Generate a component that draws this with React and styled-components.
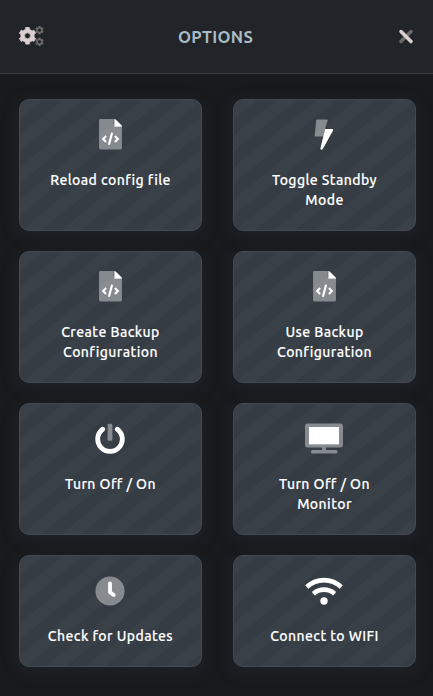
import React from "react";
import styled, { createGlobalStyle } from "styled-components";

const GlobalStyle = createGlobalStyle`
  * { box-sizing: border-box; }
  body {
    margin: 0;
    background: #191a1e;
    font-family: Ubuntu, "Noto Sans", sans-serif;
    -webkit-font-smoothing: antialiased;
  }
`;

const Panel = styled.main`
  height: 696px;
  overflow: hidden;
  background: #191a1e;
`;

const Header = styled.header`
  height: 74px;
  display: grid;
  grid-template-columns: 26px 1fr 26px;
  align-items: center;
  padding: 0 14px 0 18px;
  background: #212428;
  border-bottom: 1px solid #3a3d41;
  color: #dccfd0;
`;

const Title = styled.h1`
  margin: 0 6px 0 0;
  text-align: center;
  font-size: 16.5px;
  line-height: 24px;
  font-weight: 600;
  letter-spacing: 0.3px;
  color: #a9bcc3;
`;

const CloseButton = styled.button`
  display: flex;
  justify-content: center;
  padding: 0;
  border: 0;
  background: none;
  color: inherit;
`;

const Grid = styled.section`
  display: grid;
  grid-template-columns: 183px 183px;
  grid-template-rows: 132px 132px 132px 112px;
  gap: 20px 31px;
  padding: 25px 17px 29px 19px;
`;

const Tile = styled.button`
  display: flex;
  flex-direction: column;
  align-items: center;
  padding: 19px 0 0;
  border: 1px solid #424b54;
  border-radius: 10px;
  background: repeating-linear-gradient(141deg, #353c44 0 2px, #394047 2px 14.5px, #353c44 14.5px 25px);
  box-shadow: 0 4px 18px rgba(48, 55, 62, 0.32);
  color: #fff;
  font-family: inherit;
`;

const IconBox = styled.span`
  display: flex;
  align-items: center;
  height: 32px;
  padding: 0 1px 1px 0;
`;

const Label = styled.span`
  margin-top: 19px;
  font-size: 14px;
  line-height: 20px;
  font-weight: 500;
  letter-spacing: 0.43px;
  -webkit-text-stroke: 0.15px currentColor;
  white-space: pre-line;
`;

const Svg = styled.svg`
  display: block;
  fill: currentColor;
`;

const gear = (cx, cy, r, hole) => {
  const pts = [];
  for (let i = 0; i < 6; i++) {
    const a = (i * Math.PI) / 3 - Math.PI / 2;
    [[-0.42, 0.78], [-0.26, 0.82], [-0.22, 1], [0.22, 1], [0.26, 0.82], [0.42, 0.78]].forEach(([d, k]) => {
      pts.push(`${(cx + Math.cos(a + d) * r * k).toFixed(2)} ${(cy + Math.sin(a + d) * r * k).toFixed(2)}`);
    });
  }
  return `M${pts.join("L")}ZM${cx - hole} ${cy}a${hole} ${hole} 0 1 0 ${2 * hole} 0a${hole} ${hole} 0 1 0 ${-2 * hole} 0Z`;
};

const GearsIcon = () => (
  <Svg width="26" height="22" viewBox="0 0 26 22" fillRule="evenodd" strokeLinejoin="round">
    <path d={gear(9.5, 9.8, 8.5, 3)} stroke="currentColor" strokeWidth=".8" />
    <g opacity=".4">
      <path d={gear(21.5, 4.2, 4.2, 1.7)} stroke="currentColor" strokeWidth=".3" />
      <path d={gear(21.5, 15.8, 4.2, 1.7)} stroke="currentColor" strokeWidth=".3" />
    </g>
  </Svg>
);

const CloseIcon = () => (
  <Svg width="16" height="16" viewBox="0 0 16 16" stroke="currentColor" strokeWidth="3.5" strokeLinecap="round">
    <path d="M13 2.500 3 12.500" opacity=".4" />
    <path d="m3 2.500 10 10" />
  </Svg>
);

const FileIcon = () => (
  <Svg width="23" height="30.500" viewBox="0 0 384 512">
    <path opacity=".4" d="M384 128H272a24 24 0 0 1-24-24V0H24A24 24 0 0 0 0 24v464a24 24 0 0 0 24 24h336a24 24 0 0 0 24-24Z" />
    <path d="M256 0v128h128v-6a24 24 0 0 0-7-17L279 7a24 24 0 0 0-17-7Z" />
    <path d="m118 285-49 51 49 51m148-102 49 51-49 51M219 232l-54 200" fill="none" stroke="currentColor" strokeWidth="36" />
  </Svg>
);

const BoltIcon = () => (
  <Svg width="20" height="31" viewBox="0 0 20 31">
    <path opacity=".4" d="M3.200.5H13q1 0 .7 1l-2.600 8L9.500 17.500H1.700q-1.200 0-1-1L2.200 1.500q0-1 1-1Z" />
    <path d="M11.100 10H18q1.600 0 1 1.400L8.800 30q-.7 1.200-1.800.6-.8-.4-.5-1.500Z" />
  </Svg>
);

const PowerIcon = () => (
  <Svg width="30" height="32" viewBox="0 0 30 32" fill="none" strokeWidth="4.800" strokeLinecap="round">
    <path d="M7.700 6.200a12.300 12.300 0 1 0 14.600 0" fill="none" stroke="currentColor" />
    <rect x="12.600" y=".8" width="4.800" height="17" rx="1.400" fill="currentColor" opacity=".4" />
  </Svg>
);

const MonitorIcon = () => (
  <Svg width="38" height="31" viewBox="0 0 38 31">
    <path opacity=".4" fillRule="evenodd" d="M3 .5h32a3 3 0 0 1 3 3v18a3 3 0 0 1-3 3H21V27h10q1.500 0 1.500 1.500v.5q0 1.500-1.500 1.500H7.500Q6 30.500 6 29v-.5Q6 27 7.500 27H17v-2.500H3a3 3 0 0 1-3-3v-18a3 3 0 0 1 3-3ZM4 4v17.500h30V4Z" />
    <path d="M4 4h30v17.500H4Z" />
  </Svg>
);

const ClockIcon = () => (
  <Svg width="30" height="30" viewBox="0 0 30 30">
    <circle cx="15" cy="15" r="14.600" opacity=".4" />
    <path d="M15 7.300v8.900l3.700 2.800" fill="none" stroke="currentColor" strokeWidth="3.800" strokeLinecap="round" strokeLinejoin="round" />
  </Svg>
);

const WifiIcon = () => (
  <Svg width="38" height="32" viewBox="0 0 38 32" stroke="currentColor" strokeWidth="4.700">
    <path d="M1.700 12Q9.500 5.200 19 5.200t17.300 6.800M8.300 18.700Q13 14.700 19 14.700t10.700 4" fill="none" />
    <circle cx="19" cy="26" r="3.700" stroke="none" />
  </Svg>
);

const options = [
  { label: "Reload config file", Icon: FileIcon },
  { label: "Toggle Standby\nMode", Icon: BoltIcon },
  { label: "Create Backup\nConfiguration", Icon: FileIcon },
  { label: "Use Backup\nConfiguration", Icon: FileIcon },
  { label: "Turn Off / On", Icon: PowerIcon },
  { label: "Turn Off / On\nMonitor", Icon: MonitorIcon },
  { label: "Check for Updates", Icon: ClockIcon },
  { label: "Connect to WIFI", Icon: WifiIcon },
];

export default function App() {
  return (
    <Panel>
      <GlobalStyle />
      <Header>
        <GearsIcon />
        <Title>OPTIONS</Title>
        <CloseButton aria-label="Close"><CloseIcon /></CloseButton>
      </Header>
      <Grid>
        {options.map(({ label, Icon }, i) => (
          <Tile key={i}>
            <IconBox><Icon /></IconBox>
            <Label>{label}</Label>
          </Tile>
        ))}
      </Grid>
    </Panel>
  );
}
